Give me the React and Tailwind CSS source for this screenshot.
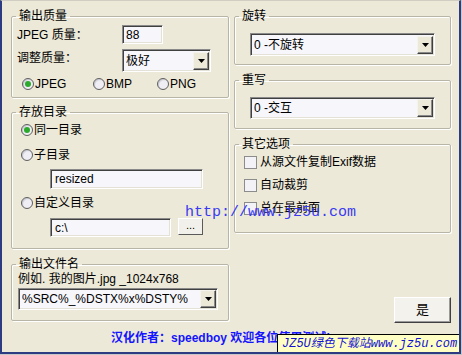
import React from "react";

const font = { fontFamily: '"Liberation Sans", "Noto Sans CJK SC", sans-serif' };

function Group({ title, className, children }) {
  return (
    <fieldset
      className={`border border-[#B8B5A6] rounded-[2px] shadow-[1px_1px_0_#fff,inset_1px_1px_0_#fff] ${className}`}
    >
      <legend className="ml-[4px] px-[3px] leading-[14px] text-[12px] text-black">{title}</legend>
      {children}
    </fieldset>
  );
}

function Sunken({ className, children }) {
  return (
    <div
      className={`flex items-center bg-[#F6F6FB] border border-t-[#8A8A8A] border-l-[#8A8A8A] border-r-white border-b-white shadow-[inset_1px_1px_0_#404040,inset_-1px_-1px_0_#E4E2D6] ${className}`}
    >
      {children}
    </div>
  );
}

function Arrow() {
  return (
    <svg width="7" height="4" viewBox="0 0 7 4">
      <polygon points="0,0 7,0 3.5,4" fill="#000" />
    </svg>
  );
}

function Select({ value, className }) {
  return (
    <Sunken className={`justify-between pl-[3px] pr-[1px] ${className}`}>
      <span className="text-[12px] leading-[14px] truncate">{value}</span>
      <div className="w-[16px] h-[18px] flex items-center justify-center bg-[#ECE9D8] border border-t-[#F4F3EE] border-l-[#F4F3EE] border-r-[#404040] border-b-[#404040] shadow-[inset_-1px_-1px_0_#8A8A8A]">
        <Arrow />
      </div>
    </Sunken>
  );
}

function Radio({ checked, label, className }) {
  return (
    <div className={`flex items-center h-[16px] ${className}`}>
      <div className="w-[12px] h-[12px] rounded-full border border-[#5E5E5E] bg-[#EEEEF4] flex items-center justify-center shadow-[inset_1px_1px_1px_#C8C8D0]">
        {checked && <div className="w-[6px] h-[6px] rounded-full bg-[#2BAA2B]" />}
      </div>
      <span className="ml-[1px] text-[12px]">{label}</span>
    </div>
  );
}

function Check({ label, className }) {
  return (
    <div className={`flex items-center h-[16px] ${className}`}>
      <div className="w-[13px] h-[13px] border border-[#8C8C8C] bg-[#F2F2F7]" />
      <span className="ml-[3px] text-[12px]">{label}</span>
    </div>
  );
}

export default function App() {
  return (
    <div className="w-[462px] h-[355px] bg-[#C8C8C8]" style={font}>
      <div className="relative w-[461px] h-[354px] bg-[#ECE9D8] border-l-2 border-r-2 border-b-2 border-[#2D3B80] border-t border-t-[#D0CEC2] overflow-hidden text-black">
        <div className="flex gap-[5px] pl-[9px] pt-[8px]">
          {/* left column */}
          <div className="w-[218px] flex flex-col">
            <Group title="输出质量" className="h-[89px]">
              <div className="flex items-center pl-[5px] mt-[2px]">
                <span className="w-[105px] text-[12px]">JPEG 质量：</span>
                <Sunken className="w-[41px] h-[19px] pl-[3px]">
                  <span className="text-[12px] leading-none">88</span>
                </Sunken>
              </div>
              <div className="flex items-center pl-[5px] mt-[5px]">
                <span className="w-[105px] text-[12px] -mt-[5px]">调整质量：</span>
                <Select value="极好" className="w-[89px] h-[23px]" />
              </div>
              <div className="flex mt-[4px] pl-[10px]">
                <Radio checked label="JPEG" className="w-[71px]" />
                <Radio label="BMP" className="w-[64px]" />
                <Radio label="PNG" />
              </div>
            </Group>

            <Group title="存放目录" className="h-[144px] mt-[7px]">
              <Radio checked label="同一目录" className="mt-[3px] ml-[9px]" />
              <Radio label="子目录" className="mt-[9px] ml-[9px]" />
              <Sunken className="ml-[38px] mt-[6px] w-[153px] h-[20px] pl-[4px]">
                <span className="text-[12px] leading-[14px]">resized</span>
              </Sunken>
              <Radio label="自定义目录" className="mt-[6px] ml-[9px]" />
              <div className="flex items-start ml-[38px] mt-[7px]">
                <Sunken className="w-[121px] h-[19px] pl-[4px]">
                  <span className="text-[12px] leading-[14px]">c:\</span>
                </Sunken>
                <div className="ml-[7px] w-[25px] h-[17px] flex items-center justify-center bg-[#F1F0EA] border border-t-white border-l-white border-r-[#5A5A5A] border-b-[#5A5A5A] text-[11px] leading-none pb-[3px]">
                  ...
                </div>
              </div>
            </Group>

            <Group title="输出文件名" className="h-[64px] mt-[8px]">
              <div className="pl-[6px] mt-[1px] text-[12px] leading-[14px]">例如. 我的图片.jpg _1024x768</div>
              <Select value="%SRC%_%DSTX%x%DSTY%" className="ml-[6px] mt-[2px] w-[200px] h-[22px]" />
            </Group>
          </div>

          {/* right column */}
          <div className="w-[217px] flex flex-col">
            <Group title="旋转" className="h-[56px]">
              <Select value="0 -不旋转" className="ml-[15px] mt-[10px] w-[185px] h-[23px]" />
            </Group>
            <Group title="重写" className="h-[56px] mt-[8px]">
              <Select value="0 -交互" className="ml-[15px] mt-[10px] w-[185px] h-[22px]" />
            </Group>
            <Group title="其它选项" className="h-[96px] mt-[8px]">
              <Check label="从源文件复制Exif数据" className="mt-[3px] ml-[9px]" />
              <Check label="自动裁剪" className="mt-[7px] ml-[9px]" />
              <Check label="总在最前面" className="mt-[7px] ml-[9px]" />
            </Group>
            <button className="self-end mt-[64px] w-[57px] h-[26px] flex items-center justify-center bg-[#F3F2EC] border border-t-white border-l-white border-r-[#404040] border-b-[#404040] shadow-[inset_-1px_-1px_0_#9A9A9A] text-[13px]">
              是
            </button>
          </div>
        </div>

        <div className="ml-[109px] mt-[7px] text-[12px] font-bold text-[#1414FF] leading-[16px] whitespace-nowrap">
          汉化作者：speedboy 欢迎各位使用测试!
        </div>

        {/* watermarks */}
        <div
          className="absolute left-[183px] top-[203px] text-[15px] leading-[18px] text-[#3A3AF0] whitespace-nowrap"
          style={{ fontFamily: '"Liberation Mono", monospace' }}
        >
          http://www.jz5u.com
        </div>
        <div
          className="absolute left-[275px] top-[333px] w-[184px] h-[20px] bg-[#FFFFC4] border border-black flex items-center pl-[4px] italic text-[12px] text-[#1212D0] leading-none whitespace-nowrap"
          style={{ fontFamily: '"Liberation Mono", "Noto Sans CJK SC", monospace' }}
        >
          JZ5U绿色下载站www.jz5u.com
        </div>
      </div>
    </div>
  );
}
